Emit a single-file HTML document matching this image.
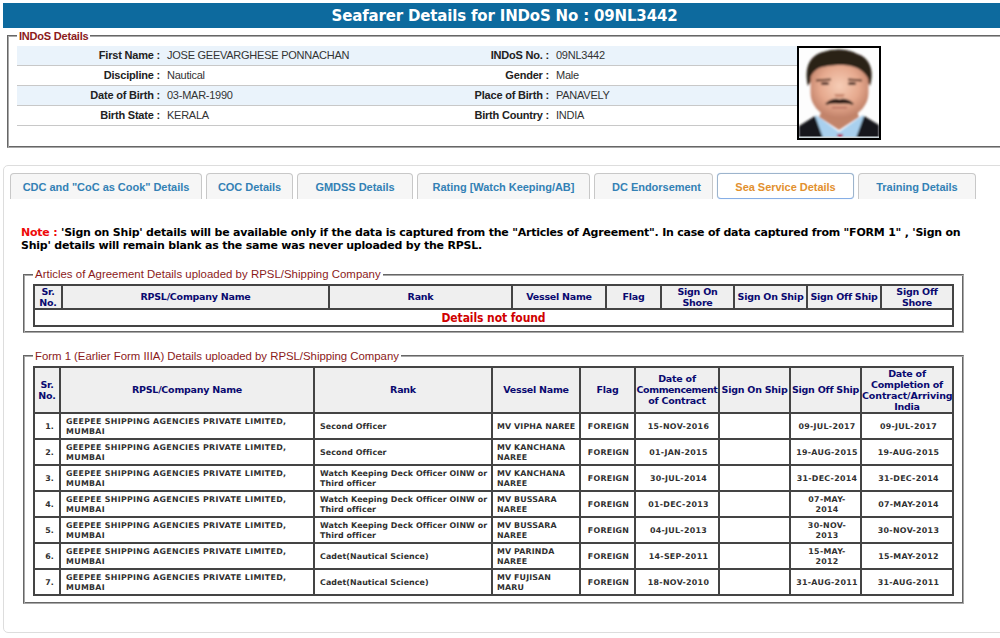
<!DOCTYPE html>
<html><head><meta charset="utf-8"><title>Seafarer Details</title>
<style>
html,body{margin:0;padding:0;background:#fff;}
body{width:1000px;height:638px;overflow:hidden;position:relative;font-family:"Liberation Sans",Arial,sans-serif;font-size:12px;color:#222;}
.abs{position:absolute;}
#title{left:3px;top:3px;width:1003px;height:25px;background:#0d6a9e;color:#fff;font-family:"DejaVu Sans",Verdana,sans-serif;font-weight:bold;font-size:15px;letter-spacing:-0.17px;line-height:27px;text-align:center;white-space:nowrap;}
.fs{border:1px solid;border-color:#666 #a8a8a8 #a8a8a8 #666;box-shadow:inset 1px 1px 0 #a8a8a8,inset -1px -1px 0 #666;box-sizing:border-box;}
.lg{background:#fff;color:#8b1a1a;font-size:11.4px;line-height:14px;white-space:nowrap;padding:0 2px;}
#fs1{left:7px;top:35px;width:1000px;height:113px;}
#lg1{left:17px;top:29px;font-weight:bold;font-size:11px;letter-spacing:-0.21px;}
.row{left:17px;width:780px;height:19px;border-bottom:1px solid #c8c8c8;}
.row.alt{background:#eaf3fb;}
.row span{position:absolute;top:0;line-height:19px;white-space:nowrap;}
.l1{right:637px;font-weight:bold;color:#222;}
.v1{left:150px;color:#333;}
.l2{right:248px;font-weight:bold;color:#222;}
.v2{left:539px;color:#333;}
#photo{left:797px;top:46px;width:84px;height:94px;box-sizing:border-box;border:2px solid #000;background:#fff;overflow:hidden;}
#tabs{left:3px;top:165px;width:1010px;height:468px;border:1px solid #ddd;border-radius:5px;box-sizing:border-box;}
.tab{top:173px;height:26px;box-sizing:border-box;border:1px solid #c8c8c8;border-bottom:none;border-radius:4px 4px 0 0;background:#f6f6f6;color:#3381b5;font-size:11px;font-weight:bold;letter-spacing:-0.03px;line-height:27px;text-align:center;white-space:nowrap;}
.tab.act{background:#fff;color:#e2902e;border:1px solid #9db4cc;border-bottom:1px solid #86aee6;border-radius:4px;box-shadow:0 0 1px #a9c8ec;height:26px;line-height:27px;}
#note{left:21px;top:226px;width:975px;font-family:"DejaVu Sans",Verdana,sans-serif;font-weight:bold;font-size:11px;letter-spacing:-0.22px;line-height:13px;color:#000;white-space:nowrap;}
#note b{color:#ee0a0a;}
table{border-collapse:collapse;table-layout:fixed;font-family:"DejaVu Sans",Verdana,sans-serif;font-weight:bold;}

.row span{font-size:11px;letter-spacing:-0.25px;}
.row .l1,.row .l2{letter-spacing:-0.2px;}
#fs2{left:23px;top:274px;width:941px;height:59px;}
#lg2{left:33px;top:267px;letter-spacing:0.03px;}
#fs3{left:23px;top:355px;width:941px;height:249px;}
#lg3{left:33px;top:349px;letter-spacing:-0.02px;}
table.g{position:absolute;left:33px;width:921px;border:1px solid #444;border-spacing:0;border-collapse:separate;table-layout:fixed;font-family:"DejaVu Sans",Verdana,sans-serif;font-weight:bold;}
table.g td,table.g th{border:1px solid #444;padding:0;overflow:hidden;}
table.g th.s{padding-bottom:1px;}
table.g td{padding-top:2px;}
table.g th{background:#efefef;color:#0a0a70;font-size:9.5px;line-height:11px;letter-spacing:-0.24px;text-align:center;vertical-align:middle;white-space:nowrap;}
table.g td{background:#fff;color:#303030;font-size:7.9px;line-height:10px;letter-spacing:0.13px;vertical-align:middle;white-space:nowrap;text-align:center;}
table.g td.l{text-align:left;padding-left:5px;}
table.g td.c{letter-spacing:0.31px;}
table.g td.d{letter-spacing:0.3px;padding-left:3px;}
table.g td.f{letter-spacing:0.25px;padding-left:2px;}
table.g td.n{padding-left:5px;}
table.g td.v{padding-left:4px;}
table.g td.r{letter-spacing:0.09px;}
.tt{letter-spacing:-0.45px;}
#t1{top:284px;}
#t2{top:366px;}
#nf{color:#d00000;font-family:"DejaVu Sans Condensed","DejaVu Sans",Verdana,sans-serif;font-size:12px;line-height:13px;letter-spacing:-0.09px;}
</style></head><body>
<div id="title" class="abs">Seafarer Details for INDoS No : 09NL3442</div>

<div id="fs1" class="abs fs"></div>
<div id="lg1" class="abs lg">INDoS Details</div>
<div class="abs row alt" style="top:46px"><span class="l1">First Name :</span><span class="v1">JOSE GEEVARGHESE PONNACHAN</span><span class="l2">INDoS No. :</span><span class="v2">09NL3442</span></div>
<div class="abs row" style="top:66px"><span class="l1">Discipline :</span><span class="v1">Nautical</span><span class="l2">Gender :</span><span class="v2">Male</span></div>
<div class="abs row alt" style="top:86px"><span class="l1">Date of Birth :</span><span class="v1">03-MAR-1990</span><span class="l2">Place of Birth :</span><span class="v2">PANAVELY</span></div>
<div class="abs row" style="top:106px"><span class="l1">Birth State :</span><span class="v1">KERALA</span><span class="l2">Birth Country :</span><span class="v2">INDIA</span></div>
<div id="photo" class="abs"><svg width="80" height="90" viewBox="0 0 80 90" style="display:block">
<defs><filter id="bl" x="-10%" y="-10%" width="120%" height="120%"><feGaussianBlur stdDeviation="0.8"/></filter>
<radialGradient id="sk" cx="0.5" cy="0.42" r="0.62"><stop offset="0" stop-color="#f6cdb6"/><stop offset="0.55" stop-color="#e6a98e"/><stop offset="1" stop-color="#b87860"/></radialGradient></defs>
<rect width="80" height="90" fill="#fdfdfd"/>
<g filter="url(#bl)">
<path d="M17 67 L40 84 L64 67 L70 90 L12 90 Z" fill="#a9d0ee"/>
<path d="M24 60 L57 60 L60 69 L40 82 L20 69 Z" fill="#c2846a"/>
<path d="M0 78 L16 68 L24 90 L0 90 Z" fill="#15151a"/>
<path d="M80 77 L65 68 L57 90 L80 90 Z" fill="#15151a"/>
<path d="M9 38 C5 20 10 8 24 4 C36 0 50 1 58 6 C70 9 76 22 71 38 L66 30 C60 20 20 20 14 30 Z" fill="#2c2219"/>
<path d="M11.5 30 C11.5 20 25 14 40.5 14 C56 14 69.5 20 69.5 30 L69.5 45 C69.5 57 60 66 51 69.5 C44 71.5 37 71.5 30 69.5 C21 66 11.5 57 11.5 45 Z" fill="url(#sk)"/>
<path d="M9 36 C6 18 12 7 26 4 C38 0 50 2 58 6 C69 10 74 20 71 35 C68 26 62 20 52 18 C44 16 28 17 20 20 C14 23 11 28 9 36 Z" fill="#2c2219"/>
<path d="M17 32.5 L32 31.5 M49 31.5 L63 32.5" stroke="#5a3626" stroke-width="1.8" fill="none"/>
<ellipse cx="26" cy="35.5" rx="4.2" ry="1.5" fill="#4b2c22"/>
<ellipse cx="53" cy="35.5" rx="4.2" ry="1.5" fill="#4b2c22"/>
<path d="M35 46 L46 46 L44 49 L37 49 Z" fill="#b9745a" opacity="0.7"/>
<path d="M27 56 C32 51 38 51 40.5 52.5 C43 51 49 51 54 56 C49 54.5 44 54.5 40.5 55 C37 54.5 32 54.5 27 56 Z" fill="#2a1a14" stroke="#2a1a14" stroke-width="1.6"/>
<path d="M33 59.5 L48 59.5" stroke="#b0675a" stroke-width="1.5"/>
<path d="M38 86 L44 86 L43 90 L39 90 Z" fill="#b0305a"/>
</g>
<rect x="0" y="88.5" width="80" height="1.5" fill="#c9d3d8"/>
</svg></div>

<div id="tabs" class="abs"></div>
<div class="abs tab" style="left:10px;width:192px">CDC and "CoC as Cook" Details</div>
<div class="abs tab" style="left:206px;width:87px">COC Details</div>
<div class="abs tab" style="left:297px;width:116px">GMDSS Details</div>
<div class="abs tab" style="left:417px;width:173px">Rating [Watch Keeping/AB]</div>
<div class="abs tab" style="left:594px;width:119px;padding-left:6px">DC Endorsement</div>
<div class="abs tab act" style="left:717px;width:137px">Sea Service Details</div>
<div class="abs tab" style="left:858px;width:118px">Training Details</div>

<div id="note" class="abs"><b>Note :</b> 'Sign on Ship' details will be available only if the data is captured from the "Articles of Agreement". In case of data captured from "FORM 1" , 'Sign on<br>Ship' details will remain blank as the same was never uploaded by the RPSL.</div>


<div id="fs2" class="abs fs"></div>
<div id="lg2" class="abs lg">Articles of Agreement Details uploaded by RPSL/Shipping Company</div>
<table id="t1" class="g"><colgroup><col style="width:28px"><col style="width:267px"><col style="width:183px"><col style="width:94px"><col style="width:55px"><col style="width:73px"><col style="width:73px"><col style="width:74px"><col style="width:72px"></colgroup>
<tr style="height:24px"><th>Sr.<br>No.</th><th class="s">RPSL/Company Name</th><th class="s">Rank</th><th class="s">Vessel Name</th><th class="s">Flag</th><th>Sign On<br>Shore</th><th class="s">Sign On Ship</th><th class="s">Sign Off Ship</th><th>Sign Off<br>Shore</th></tr>
<tr style="height:14px"><td id="nf" colspan="9">Details not found</td></tr>
</table>

<div id="fs3" class="abs fs"></div>
<div id="lg3" class="abs lg">Form 1 (Earlier Form IIIA) Details uploaded by RPSL/Shipping Company</div>
<table id="t2" class="g"><colgroup><col style="width:26px"><col style="width:254px"><col style="width:178px"><col style="width:88px"><col style="width:55px"><col style="width:84px"><col style="width:71px"><col style="width:71px"><col style="width:92px"></colgroup>
<tr style="height:46px"><th>Sr.<br>No.</th><th class="s">RPSL/Company Name</th><th class="s">Rank</th><th class="s">Vessel Name</th><th class="s">Flag</th><th class="s">Date of<br><span class="tt">Commencement</span><br>of Contract</th><th class="s">Sign On Ship</th><th class="s">Sign Off Ship</th><th>Date of<br>Completion of<br><span style="letter-spacing:-0.12px">Contract/Arriving</span><br>India</th></tr>
<tr style="height:26px"><td class="n">1.</td><td class="l c">GEEPEE SHIPPING AGENCIES PRIVATE LIMITED,<br>MUMBAI</td><td class="l r">Second Officer</td><td class="l v">MV VIPHA NAREE</td><td class="f">FOREIGN</td><td class="d">15-NOV-2016</td><td></td><td class="d">09-JUL-2017</td><td class="d">09-JUL-2017</td></tr>
<tr style="height:26px"><td class="n">2.</td><td class="l c">GEEPEE SHIPPING AGENCIES PRIVATE LIMITED,<br>MUMBAI</td><td class="l r">Second Officer</td><td class="l v">MV KANCHANA<br>NAREE</td><td class="f">FOREIGN</td><td class="d">01-JAN-2015</td><td></td><td class="d">19-AUG-2015</td><td class="d">19-AUG-2015</td></tr>
<tr style="height:26px"><td class="n">3.</td><td class="l c">GEEPEE SHIPPING AGENCIES PRIVATE LIMITED,<br>MUMBAI</td><td class="l r">Watch Keeping Deck Officer OINW or<br>Third officer</td><td class="l v">MV KANCHANA<br>NAREE</td><td class="f">FOREIGN</td><td class="d">30-JUL-2014</td><td></td><td class="d">31-DEC-2014</td><td class="d">31-DEC-2014</td></tr>
<tr style="height:26px"><td class="n">4.</td><td class="l c">GEEPEE SHIPPING AGENCIES PRIVATE LIMITED,<br>MUMBAI</td><td class="l r">Watch Keeping Deck Officer OINW or<br>Third officer</td><td class="l v">MV BUSSARA<br>NAREE</td><td class="f">FOREIGN</td><td class="d">01-DEC-2013</td><td></td><td class="d">07-MAY-<br>2014</td><td class="d">07-MAY-2014</td></tr>
<tr style="height:26px"><td class="n">5.</td><td class="l c">GEEPEE SHIPPING AGENCIES PRIVATE LIMITED,<br>MUMBAI</td><td class="l r">Watch Keeping Deck Officer OINW or<br>Third officer</td><td class="l v">MV BUSSARA<br>NAREE</td><td class="f">FOREIGN</td><td class="d">04-JUL-2013</td><td></td><td class="d">30-NOV-<br>2013</td><td class="d">30-NOV-2013</td></tr>
<tr style="height:26px"><td class="n">6.</td><td class="l c">GEEPEE SHIPPING AGENCIES PRIVATE LIMITED,<br>MUMBAI</td><td class="l r">Cadet(Nautical Science)</td><td class="l v">MV PARINDA<br>NAREE</td><td class="f">FOREIGN</td><td class="d">14-SEP-2011</td><td></td><td class="d">15-MAY-<br>2012</td><td class="d">15-MAY-2012</td></tr>
<tr style="height:26px"><td class="n">7.</td><td class="l c">GEEPEE SHIPPING AGENCIES PRIVATE LIMITED,<br>MUMBAI</td><td class="l r">Cadet(Nautical Science)</td><td class="l v">MV FUJISAN<br>MARU</td><td class="f">FOREIGN</td><td class="d">18-NOV-2010</td><td></td><td class="d">31-AUG-2011</td><td class="d">31-AUG-2011</td></tr>
</table>
</body></html>
